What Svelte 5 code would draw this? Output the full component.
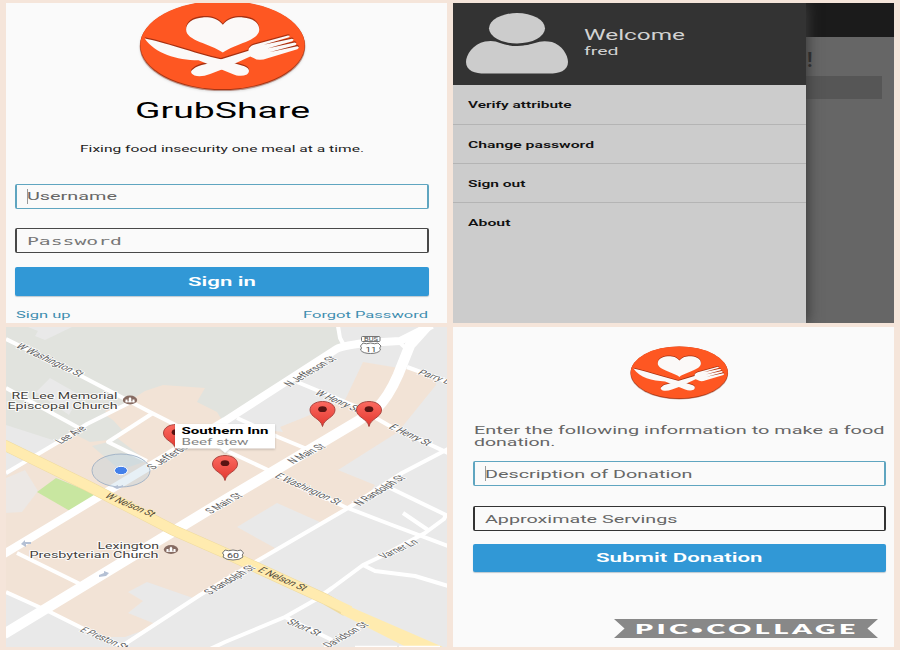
<script>
  const menu = [
    { label: 'Verify attribute', width: 103.5 },
    { label: 'Change password', width: 126 },
    { label: 'Sign out', width: 57.5 },
    { label: 'About', width: 42.5 }
  ];

  const stretch = 1.8;

  // Each street name runs along its baseline from (x1, y1) to (x2, y2).
  const streets = [
    ['W Washington St', 15, 347, 79, 377],
    ['Lee Ave', 61, 444, 87, 429],
    ['S Jefferson St', 153, 470, 203, 439],
    ['N Jefferson St', 290, 387, 337, 359],
    ['W Henry St', 314, 394, 356, 412],
    ['E Henry St', 388, 428, 427, 446],
    ['Parry Ln', 417, 374, 453, 386],
    ['N Main St', 293, 464, 326, 447],
    ['E Washington St', 274, 477, 337, 505],
    ['N Randolph St', 360, 506, 406, 478],
    ['Varner Ln', 384, 559, 419, 543],
    ['E Nelson St', 257, 571, 303, 591, true],
    ['S Randolph St', 210, 595, 256, 568],
    ['S Main St', 211, 514, 243, 496],
    ['W Nelson St', 104, 497, 151, 517, true],
    ['E Preston St', 79, 631, 124, 650],
    ['Short St', 286, 623, 317, 636],
    ['Davidson St', 329, 648, 369, 625]
  ].map(([name, x1, y1, x2, y2, major]) => {
    const dx = (x2 - x1) / stretch;
    const dy = y2 - y1;
    return {
      name, x1, y1, major,
      length: Math.hypot(dx, dy),
      angle: (Math.atan2(dy, dx) * 180) / Math.PI
    };
  });

  const lanes = [
    'M6 339L83 377L150 412L225 450L268 470L345 507L392 525L448 546',
    'M6 388L79 428', 'M6 473L60 441L87 424L131 402', 'M153 413L108 442L147 461',
    'M297 382L355 406L388 425L448 453', 'M237 418L278 437L307 449', 'M407 367L448 382',
    'M338 326L340 338L346 349', 'M448 449L402 473L348 508L257 561L200 595L122 646',
    'M388 487L446 515L444 519L425 533L382 556L363 565L332 588L315 600L285 617L225 642L208 650',
    'M363 565L375 571L415 576L448 586', 'M403 513L428 530', 'M285 617L332 640',
    'M367 622L325 648', 'M6 592L50 612L80 627L125 648', 'M17 553L80 584'
  ];
</script>

{#snippet wide(text, width, size, weight = 400, family = 'Roboto')}
  <svg class="wide" {width} height={size} aria-label={text}>
    <text x="0" y={size * 0.82} font-size={size} font-weight={weight} font-family="{family}, 'Liberation Sans', sans-serif"
      textLength={width} lengthAdjust="spacingAndGlyphs">{text}</text>
  </svg>
{/snippet}

{#snippet artwork()}
  <path d="M278 74C262 54 240 51 218 52C188 54 168 68 168 88C168 122 240 130 278 157C316 130 387 122 387 88C387 68 368 54 338 52C316 51 294 54 278 74Z" />
  <path d="M44 115C98 125 190 158 275 178L335 196C357 201 362 213 350 223C336 229 320 227 307 221L272 207L205 180C140 180 75 160 44 115Z" />
  <path d="M190 206Q199 197 228 191L355 152Q353 141 371 134L473 106Q483 107 474 112L400 134L485 116Q494 118 486 123L411 145L493 127Q502 130 495 135L417 156L501 138Q510 142 501 147L412 174Q385 184 370 173L360 169L275 208L240 221Q213 232 193 226Q174 216 190 206Z" />
{/snippet}

{#snippet logo(width, height)}
  <svg class="logo" {width} {height} viewBox="27 0 500 272" preserveAspectRatio="none">
    <ellipse cx="277" cy="140" rx="248" ry="132" fill="#9b5442" opacity=".55" />
    <ellipse cx="277" cy="136" rx="247" ry="133" fill="#a93513" />
    <ellipse cx="277" cy="134" rx="246" ry="132" fill="#fe5722" />
    <g fill="#a63011" transform="translate(0 -4)">{@render artwork()}</g>
    <g fill="#fbf9f8">{@render artwork()}</g>
  </svg>
{/snippet}

{#snippet pin(x, y)}
  <g transform="translate({x} {y})">
    <path d="M0 0C-1.5-8-12.5-9-12.5-16.5C-12.5-21.5-7-25-0-25S12.5-21.5 12.5-16.5C12.5-9 1.5-8 0 0Z" fill="url(#pinFill)" stroke="#a33b35" stroke-width=".9" />
    <ellipse cy="-17.3" rx="4.3" ry="2.9" fill="#591412" />
  </g>
{/snippet}

{#snippet church(x, y)}
  <g transform="translate({x} {y})">
    <ellipse rx="7.2" ry="4.4" fill="#866b62" />
    <path d="M-4.500 2.200V-.5H-2.500V2.200ZM-1.300 2.200V-1.500L0-3L1.300-1.500V2.200ZM2.500 2.200V-.5H4.500V2.200Z" fill="#fff" />
    <path d="M-4.500 1.800H4.500" stroke="#fff" stroke-width=".8" />
  </g>
{/snippet}

{#snippet place(text, x, y, width)}
  <text class="place" {x} {y} textLength={width} lengthAdjust="spacingAndGlyphs">{text}</text>
{/snippet}

<main>
  <section class="login">
    {@render logo(167, 91)}
    <h1>{@render wide('GrubShare', 175, 21.3, 400)}</h1>
    <p>{@render wide('Fixing food insecurity one meal at a time.', 284, 9.3)}</p>
    <div class="field focus">{@render wide('Username', 90, 11)}</div>
    <div class="field second mono">{@render wide('Password', 95, 10.6, 400, 'DejaVu Sans Mono')}</div>
    <button class="signin">{@render wide('Sign in', 68, 12.7, 600)}</button>
    <div class="links">
      {@render wide('Sign up', 54.5, 9.8)}
      {@render wide('Forgot Password', 125, 9.8)}
    </div>
  </section>

  <section class="account">
    <aside>
      <header>
        <svg class="avatar" width="103" height="62" viewBox="0 0 103 62">
          <path fill="#ccc" d="M19 28.500Q28 27 34 30Q51 36 69 30Q76 27 86 29C96 32 102 42 102 49C102 58 93 60.500 83 60.500H19C9 60.500 0 58 0 49C0 42 7 31 19 28.500Z" />
          <ellipse cx="51.500" cy="15.500" rx="29" ry="17" fill="#333" />
          <ellipse cx="51" cy="15.300" rx="28" ry="15.200" fill="#ccc" />
        </svg>
        <div class="greeting">
          {@render wide('Welcome', 101, 14)}
          {@render wide('fred', 34.5, 11.3)}
        </div>
      </header>
      <nav>
        {#each menu as item}
          <a href="#menu">{@render wide(item.label, item.width, 9.6, 600)}</a>
        {/each}
      </nav>
    </aside>
    <div class="behind">
      <div class="bar"></div>
      <div class="bang">!</div>
      <div class="block"></div>
    </div>
  </section>

  <section class="map">
    <svg width="441" height="320" viewBox="6 327 441 320">
      <defs>
        <linearGradient id="pinFill" x1="0" y1="0" x2="0" y2="1">
          <stop offset="0" stop-color="#fb6a60" />
          <stop offset="1" stop-color="#e2372f" />
        </linearGradient>
      </defs>
      <rect x="6" y="327" width="441" height="320" fill="#e9e9e9" />
      <path fill="#e1e3de" d="M6 327H336L341 347L225 418L147 465L90 452L6 425Z" />
      <path fill="#e9e9e9" d="M50 378L80 395L69 415L36 392ZM28 327H72L45 340L35 336L38 331Z" />
      <path fill="#f2e3d6" d="M6 476L60 441L87 424L112 412L145 391L163 385L205 388L197 402L217 412L225 425L283 432L280 427L305 417L345 400L363 362L435 374L436 385L398 432L338 470L375 485L368 495L322 523L277 503L237 527L275 548L257 563L225 580L193 598L147 582L128 592L143 601L128 613L158 625L125 637L100 637L80 627L47 610L6 592Z" />
      <path fill="#e9e9e9" d="M6 478L25 470L38 491L22 512L6 513Z" opacity=".75" />
      <path fill="#e1e3de" d="M92 446L108 442L112 434L147 461L120 470Z" />
      <path fill="#e1e3de" d="M92 421L105 415L126 428L108 440L90 442L74 434Z" />
      <path fill="#f2e3d6" d="M105 411L131 402L152 414L122 430ZM64 440L104 462L96 478L50 456Z" />
      <path fill="#c8e6a0" d="M37 492L56 478L97 495L70 511Z" />
      <g fill="none" stroke="#fff" stroke-linejoin="round">
        {#each lanes as d}<path {d} stroke-width="4" />{/each}
        <path stroke-width="8" d="M4 554L115 487L225 421L335 350Q340 346 365 343L400 341L432 325" />
        <path stroke-width="10.500" d="M4 634L225 500L358 421L376 409Q388 398 398 375L410 345L428 325" />
        <path stroke-width="4" d="M398 341L411 353" />
      </g>
      <path fill="none" stroke="#efdba0" stroke-width="11" d="M4 445L88 486L173 530L225 553L325 599L346 611" />
      <path fill="none" stroke="#ffebaf" stroke-width="10" d="M4 445L88 486L173 530L225 553L325 599L350 611" />
      <path fill="#ffebaf" d="M340 602L353 608L443 647L408 648L341 614Z" />
      <ellipse cx="121" cy="470.500" rx="29" ry="16.500" fill="#a5c7df" fill-opacity=".27" stroke="#95a9c1" stroke-width=".8" />
      <ellipse cx="121" cy="470.500" rx="6.500" ry="4.200" fill="#4380ea" stroke="#fff" />
      <g fill="#b4c0d4">
        <path d="M21 544L25 540V542H31V544H26V547ZM109 573L104 571V573L99 575V577L106 576ZM113 487L118 485V487L123 485V487L117 489Z" />
      </g>
      {#each streets as s}
        <text class="street" class:major={s.major} transform="translate({s.x1} {s.y1}) scale({stretch} 1) rotate({s.angle})"
          textLength={s.length} lengthAdjust="spacingAndGlyphs">{s.name}</text>
      {/each}
      {@render place('RE Lee Memorial', 11.5, 399, 106)}
      {@render place('Episcopal Church', 7.5, 408.5, 110)}
      {@render place('Lexington', 97.5, 548.5, 61.5)}
      {@render place('Presbyterian Church', 29.5, 557.5, 129)}
      {@render church(130, 400)}
      {@render church(171, 549.5)}
      <g fill="#fff" stroke="#666" stroke-width=".9">
        <rect x="361.500" y="336.500" width="18.500" height="5" rx="1" />
        <path d="M363 343Q366 344.500 370.500 343Q375 344.500 378 343L381 346Q378.500 348 380.500 350Q378 353.500 370.500 353.500T360.500 350Q362.500 348 360.500 346Z" />
        <path d="M225 550Q228 551.500 233 550Q238 551.500 241 550L243.500 553Q241 555 243 557Q240 560 233 560T223 557Q225 555 222.500 553Z" />
      </g>
      <text class="shield" x="364" y="341" font-size="5.500" textLength="14" lengthAdjust="spacingAndGlyphs">BUS</text>
      <text class="shield" x="365.500" y="351.500" font-size="8" textLength="11" lengthAdjust="spacingAndGlyphs">11</text>
      <text class="shield" x="227" y="558" font-size="7.500" textLength="12" lengthAdjust="spacingAndGlyphs">60</text>
      {@render pin(322.5, 426.500)}
      {@render pin(369, 426.500)}
      {@render pin(176, 449.500)}
      {@render pin(225, 480.500)}
      <path class="callout" d="M175 424H275V448.500H230L225 453L220 448.500H175Z" />
      <text x="181.500" y="434" font-size="9.600" font-weight="700" textLength="87" lengthAdjust="spacingAndGlyphs">Southern Inn</text>
      <text x="181.500" y="445" font-size="9.600" fill="#868686" textLength="67" lengthAdjust="spacingAndGlyphs">Beef stew</text>
      <path stroke="#fff" stroke-width="1.500" d="M355 646.500H397M399 646.500H440" />
    </svg>
  </section>

  <section class="donate">
    {@render logo(98.5, 53.5)}
    <div class="intro">
      {@render wide('Enter the following information to make a food', 410.5, 11.5)}
      {@render wide('donation.', 81.5, 11.5)}
    </div>
    <div class="field focus">{@render wide('Description of Donation', 207.5, 11)}</div>
    <div class="field second">{@render wide('Approximate Servings', 192.5, 11)}</div>
    <button>{@render wide('Submit Donation', 166.5, 12.7, 600)}</button>
    <div class="ribbon">
      <svg class="wide" width="224" height="14">
        <text x="1" y="12" font-size="13.700" textLength="224" lengthAdjust="spacingAndGlyphs">PIC<tspan font-size="9.500" dy="-1.500">•</tspan><tspan dy="1.500">COLLAGE</tspan></text>
      </svg>
    </div>
  </section>
</main>

<style>
  :global(body) { margin: 0; background: #f5e5da; }
  main {
    box-sizing: border-box; width: 900px; height: 650px; padding: 3px 6px;
    display: grid; grid-template-columns: 441px 441px; grid-template-rows: 320px 320px; gap: 4px 6px;
    background: #f5e5da; font-family: Roboto, 'Liberation Sans', sans-serif; overflow: hidden;
  }
  section { overflow: hidden; background: #fafafa; }
  svg { display: block; flex: none; }
  .wide { overflow: visible; fill: currentColor; }
  h1, p { margin: 0; }
  .login, .donate { display: flex; flex-direction: column; box-sizing: border-box; }
  .login { padding: 0 18px 0 9px; color: #000; }
  .login .logo { align-self: center; margin-top: -3px; filter: drop-shadow(0 1px 1px #0002); }
  .login h1 { align-self: center; margin-top: 10px; height: 21px; line-height: 0; }
  .login p { align-self: center; margin-top: 21.500px; color: #222; height: 9.500px; }
  .field {
    box-sizing: border-box; height: 25px; flex: none; display: flex; align-items: center;
    padding-left: 10px; border: 1px solid #484848; border-left-width: 2px; border-right-width: 2px;
    border-radius: 2px; color: #666;
  }
  .focus { border-color: #5fa5c0; position: relative; }
  .focus::before { content: ''; position: absolute; left: 10px; top: 4px; width: 1px; height: 15px; background: #999; }
  .login .focus { margin-top: 31px; }
  .second { margin-top: 19px; }
  .mono { color: #777; padding-top: 1px; }
  button {
    flex: none; height: 28px; padding: 0; border: 0; border-radius: 2px; background: #3198d6; color: #fff;
    display: flex; align-items: center; justify-content: center; box-shadow: 0 1px 1px #bcc8d0;
  }
  .signin { height: 29px; margin-top: 14px; }
  .login .signin { padding-top: 1px; }
  .links { display: flex; justify-content: space-between; margin: 13.500px 1px 0; color: #3f8eb0; }

  .account { display: flex; background: #666; }
  aside { width: 353px; background: #ccc; flex: none; box-shadow: 2px 0 12px #3a3a3a; z-index: 1; }
  header { height: 82px; box-sizing: border-box; background: #333; padding: 10px 0 0 13px; display: flex; color: #d2d2d2; }
  .greeting { padding: 15.500px 0 0 15px; display: flex; flex-direction: column; gap: 3px; }
  nav a {
    box-sizing: border-box; display: flex; align-items: center; height: 39px; padding: 1.500px 0 0 15px;
    border-bottom: 1px solid #b4b4b4; color: #111; text-decoration: none;
  }
  nav a:first-child { height: 40px; }
  nav a:last-child { border: 0; }
  .behind { flex: 1; display: flex; flex-direction: column; }
  .bar { height: 34px; background: #1b1b1b; }
  .bang { height: 39px; padding-left: 1px; line-height: 46px; font-size: 20px; font-weight: 700; color: #2d2d2d; position: relative; z-index: 2; }
  .block { height: 23px; margin-right: 12px; background: #565656; }

  .map text { font-family: Roboto, 'Liberation Sans', sans-serif; }
  .street { font-size: 7.800px; fill: #5c5c5c; paint-order: stroke; stroke: #fff; stroke-width: 1.200px; }
  .street.major { fill: #4f4838; stroke: #ffebaf; }
  .place { font-size: 9.800px; fill: #453f3c; paint-order: stroke; stroke: #fff; stroke-width: 1.500px; }
  .shield { fill: #444; }
  .callout { fill: #fff; filter: drop-shadow(0 1px 1px #0003); }

  .donate { padding: 19px 8px 0 20px; }
  .donate .logo { align-self: center; }
  .intro { margin: 25px 0 1.500px .5px; height: 35px; display: flex; flex-direction: column; gap: 1px; color: #666; flex: none; }
  .donate .field { padding-top: 1px; padding-left: 9.500px; }
  .donate .second { border-color: #333; margin-top: 20px; }
  .donate button { margin-top: 13px; padding-top: 1px; }
  .ribbon {
    align-self: flex-end; margin: 47px 8px 0 0; width: 264px; height: 19px; flex: none; box-sizing: border-box;
    display: flex; align-items: center; justify-content: center; background: #888; color: #fff;
    font-family: Lato, 'Open Sans', sans-serif; font-weight: 800; letter-spacing: 1.800px;
    clip-path: polygon(0 0, 100% 0, 96% 50%, 100% 100%, 0 100%, 4% 50%);
  }
</style>
